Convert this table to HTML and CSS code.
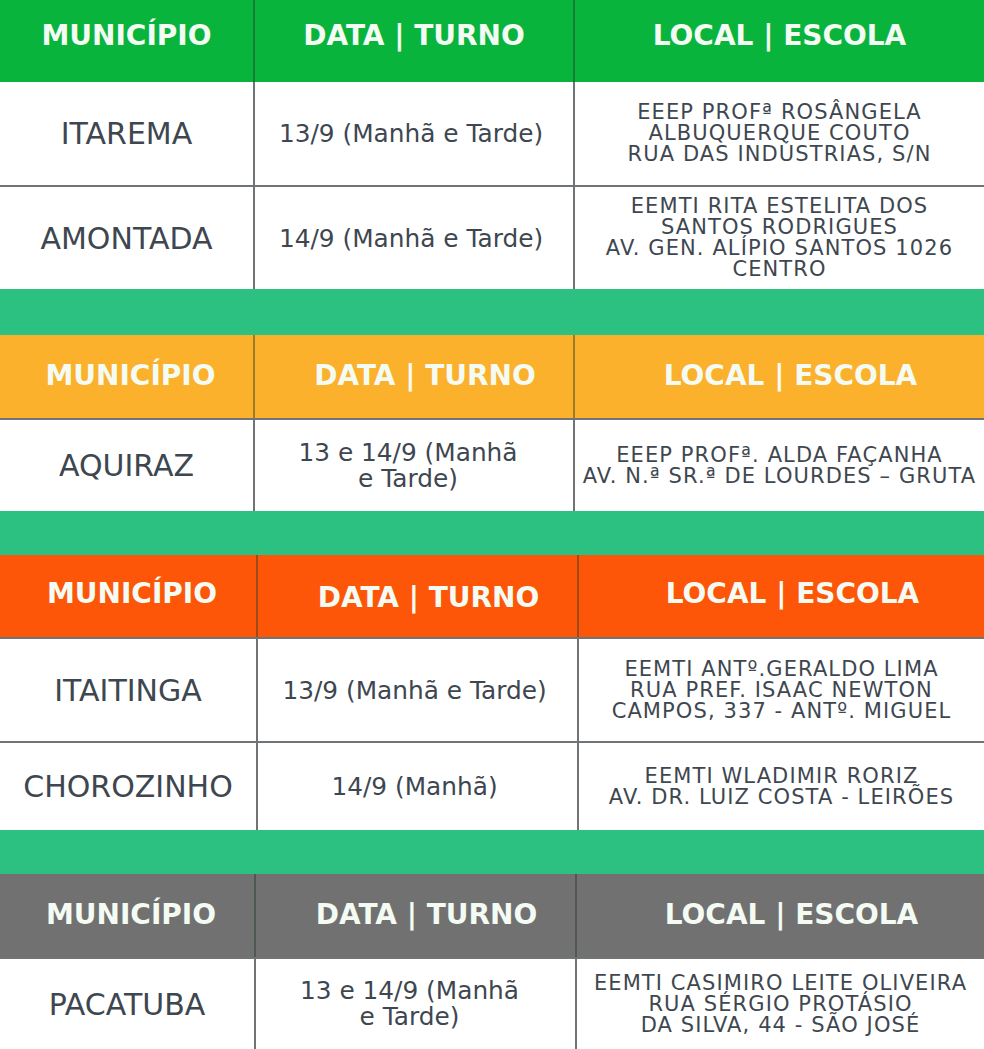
FILE: index.html
```html
<!DOCTYPE html>
<html lang="pt-BR">
<head>
<meta charset="utf-8">
<title>Locais</title>
<link rel="stylesheet" href="styles.css">
</head>
<body>
<div class="page">
  <section class="tbl t1">
    <div class="hd c1">MUNICÍPIO</div>
    <div class="hd c2">DATA | TURNO</div>
    <div class="hd c3">LOCAL | ESCOLA</div>

    <div class="cell mun r1">ITAREMA</div>
    <div class="cell dt r1">13/9 (Manhã e Tarde)</div>
    <div class="cell loc r1">EEEP PROFª ROSÂNGELA<br>ALBUQUERQUE COUTO<br>RUA DAS INDÚSTRIAS, S/N</div>

    <div class="cell mun r2 bt">AMONTADA</div>
    <div class="cell dt r2 bt">14/9 (Manhã e Tarde)</div>
    <div class="cell loc r2 bt">EEMTI RITA ESTELITA DOS<br>SANTOS RODRIGUES<br>AV. GEN. ALÍPIO SANTOS 1026<br>CENTRO</div>
  </section>

  <div class="sep s1"></div>

  <section class="tbl t2">
    <div class="hd c1">MUNICÍPIO</div>
    <div class="hd c2 shift">DATA | TURNO</div>
    <div class="hd c3 shift">LOCAL | ESCOLA</div>

    <div class="cell mun r3 bt">AQUIRAZ</div>
    <div class="cell dt r3 bt two">13 e 14/9 (Manhã<br>e Tarde)</div>
    <div class="cell loc r3 bt">EEEP PROFª. ALDA FAÇANHA<br>AV. N.ª SR.ª DE LOURDES – GRUTA</div>
  </section>

  <div class="sep s2"></div>

  <section class="tbl t3">
    <div class="hd c1">MUNICÍPIO</div>
    <div class="hd c2 shift low">DATA | TURNO</div>
    <div class="hd c3 shift">LOCAL | ESCOLA</div>

    <div class="cell mun r4 bt">ITAITINGA</div>
    <div class="cell dt r4 bt">13/9 (Manhã e Tarde)</div>
    <div class="cell loc r4 bt">EEMTI ANTº.GERALDO LIMA<br>RUA PREF. ISAAC NEWTON<br>CAMPOS, 337 - ANTº. MIGUEL</div>

    <div class="cell mun r5 bt">CHOROZINHO</div>
    <div class="cell dt r5 bt">14/9 (Manhã)</div>
    <div class="cell loc r5 bt">EEMTI WLADIMIR RORIZ<br>AV. DR. LUIZ COSTA - LEIRÕES</div>
  </section>

  <div class="sep s3"></div>

  <section class="tbl t4">
    <div class="hd c1">MUNICÍPIO</div>
    <div class="hd c2 shift">DATA | TURNO</div>
    <div class="hd c3 shift">LOCAL | ESCOLA</div>

    <div class="cell mun r6 bt">PACATUBA</div>
    <div class="cell dt r6 bt two">13 e 14/9 (Manhã<br>e Tarde)</div>
    <div class="cell loc r6 bt">EEMTI CASIMIRO LEITE OLIVEIRA<br>RUA SÉRGIO PROTÁSIO<br>DA SILVA, 44 - SÃO JOSÉ</div>
  </section>
</div>
</body>
</html>
```

FILE: styles.css
```css
html, body {
  margin: 0;
  padding: 0;
  background: #ffffff;
}

.page {
  width: 984px;
  display: flex;
  flex-direction: column;
  font-family: "DejaVu Sans", "Liberation Sans", sans-serif;
}

.tbl {
  display: grid;
  grid-template-columns: 253px 320px 1fr;
}

.t3 {
  grid-template-columns: 256px 321px 1fr;
}

.t4 {
  grid-template-columns: 254px 321px 1fr;
}

.hd {
  height: 82px;
  display: flex;
  align-items: center;
  justify-content: center;
  color: #f3fbf3;
  font-weight: 700;
  font-size: 28px;
  padding-bottom: 12px;
  box-sizing: border-box;
  white-space: nowrap;
}

.t2 .hd, .t4 .hd {
  height: 83px;
  padding-bottom: 2px;
}

.t3 .hd {
  padding-bottom: 5px;
}

.t3 .hd.low {
  padding-bottom: 0;
  padding-top: 2px;
}

.hd.c2, .hd.c3 {
  border-left: 2px solid rgba(40, 60, 40, 0.45);
}

.t1 .hd { background: #09b43d; }
.t2 .hd { background: #fbb12b; }
.t3 .hd { background: #fe5608; }
.t4 .hd { background: #717171; }

.t2 .hd, .t3 .hd, .t4 .hd { padding-left: 8px; }
.t2 .hd.shift, .t3 .hd.shift, .t4 .hd.shift { padding-left: 22px; }

.cell {
  display: flex;
  align-items: center;
  justify-content: center;
  text-align: center;
  color: #3e4750;
  box-sizing: border-box;
  white-space: nowrap;
}

.cell.dt, .cell.loc {
  border-left: 2px solid #707476;
}

.cell.bt {
  border-top: 2px solid #707476;
}

.mun {
  font-size: 30px;
}

.dt {
  font-size: 24.8px;
  padding-right: 6px;
}

.dt.two {
  line-height: 26px;
  padding-right: 12px;
}

.loc {
  font-size: 21px;
  line-height: 21px;
  letter-spacing: 1.1px;
}

.r1 { height: 103px; }
.r2 { height: 104px; }
.r3 { height: 93px; }
.r4 { height: 104px; }
.r5 { height: 89px; }
.r6 { height: 92px; }

.sep {
  background: #2cc081;
}

.s1 { height: 46px; }
.s2 { height: 44px; }
.s3 { height: 44px; }
```
